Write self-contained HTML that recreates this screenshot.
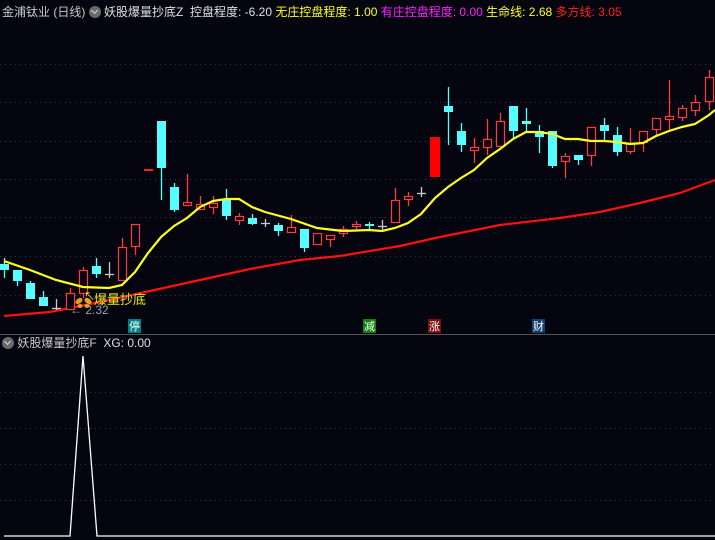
<!DOCTYPE html>
<html><head><meta charset="utf-8"><style>
html,body{margin:0;padding:0;background:#05050f;width:715px;height:540px;overflow:hidden}
.t{position:absolute;font-family:"Liberation Sans","Noto Sans CJK SC",sans-serif;font-size:12px;white-space:pre;line-height:15px}
.ico{display:inline-block;width:12px;height:12px;border-radius:6px;background:#6a6a6a;vertical-align:-2px;position:relative}
.ico:after{content:"";position:absolute;left:3px;top:2px;width:4px;height:4px;border-right:1.5px solid #ddd;border-bottom:1.5px solid #ddd;transform:rotate(45deg)}
.b{position:absolute;width:13px;height:14px;font-family:"Noto Sans CJK SC",sans-serif;font-size:11px;line-height:14px;text-align:center;color:#fff}
</style></head><body>
<svg width="715" height="540" style="position:absolute;left:0;top:0" xmlns="http://www.w3.org/2000/svg">
<g stroke="#3a3a44" stroke-dasharray="1,4" stroke-width="1">
<line x1="0" y1="64.5" x2="715" y2="64.5"/><line x1="0" y1="102.5" x2="715" y2="102.5"/><line x1="0" y1="141.5" x2="715" y2="141.5"/><line x1="0" y1="179.5" x2="715" y2="179.5"/><line x1="0" y1="217.5" x2="715" y2="217.5"/><line x1="0" y1="256.5" x2="715" y2="256.5"/><line x1="0" y1="295.5" x2="715" y2="295.5"/>
<line x1="0" y1="392.5" x2="715" y2="392.5"/><line x1="0" y1="428.5" x2="715" y2="428.5"/><line x1="0" y1="464.5" x2="715" y2="464.5"/><line x1="0" y1="500.5" x2="715" y2="500.5"/>
</g>
<line x1="0" y1="334.5" x2="715" y2="334.5" stroke="#555" stroke-width="1"/>
<polyline fill="none" stroke="#ff1010" stroke-width="2.2" points="4,316 50,312 100,302 150,291 200,280 250,269 300,260 340,256 400,246 440,237 500,225 560,218 600,212 640,203 680,193 715,180"/>
<g stroke-width="1.3">
<g stroke="#55ffff">
<line x1="4.5" y1="258" x2="4.5" y2="278"/><line x1="17.5" y1="270" x2="17.5" y2="286"/><line x1="30.5" y1="281" x2="30.5" y2="299"/><line x1="43.5" y1="291" x2="43.5" y2="306"/><line x1="96.5" y1="258" x2="96.5" y2="278"/><line x1="161.5" y1="121" x2="161.5" y2="200"/><line x1="174.5" y1="183" x2="174.5" y2="212"/><line x1="226.5" y1="189" x2="226.5" y2="220"/><line x1="252.5" y1="214" x2="252.5" y2="225"/><line x1="278.5" y1="223" x2="278.5" y2="236"/><line x1="304.5" y1="229" x2="304.5" y2="252"/><line x1="369.5" y1="222" x2="369.5" y2="229"/><line x1="448.5" y1="87" x2="448.5" y2="145"/><line x1="461.5" y1="123" x2="461.5" y2="152"/><line x1="513.5" y1="106" x2="513.5" y2="140"/><line x1="526.5" y1="108" x2="526.5" y2="131"/><line x1="539.5" y1="125" x2="539.5" y2="153"/><line x1="552.5" y1="131" x2="552.5" y2="168"/><line x1="578.5" y1="155" x2="578.5" y2="165"/><line x1="604.5" y1="118" x2="604.5" y2="142"/><line x1="617.5" y1="127" x2="617.5" y2="156"/>
</g>
<g stroke="#ff3c3c">
<line x1="70.5" y1="288" x2="70.5" y2="310"/><line x1="83.5" y1="267" x2="83.5" y2="298"/><line x1="122.5" y1="238" x2="122.5" y2="281"/><line x1="135.5" y1="224" x2="135.5" y2="255"/><line x1="187.5" y1="174" x2="187.5" y2="206"/><line x1="200.5" y1="196" x2="200.5" y2="210"/><line x1="213.5" y1="196" x2="213.5" y2="214"/><line x1="239.5" y1="213" x2="239.5" y2="225"/><line x1="291.5" y1="215" x2="291.5" y2="233"/><line x1="317.5" y1="233" x2="317.5" y2="245"/><line x1="330.5" y1="235" x2="330.5" y2="247"/><line x1="343.5" y1="226" x2="343.5" y2="237"/><line x1="356.5" y1="221" x2="356.5" y2="229"/><line x1="395.5" y1="188" x2="395.5" y2="223"/><line x1="408.5" y1="192" x2="408.5" y2="206"/><line x1="474.5" y1="138" x2="474.5" y2="163"/><line x1="487.5" y1="119" x2="487.5" y2="155"/><line x1="500.5" y1="113" x2="500.5" y2="147"/><line x1="565.5" y1="153" x2="565.5" y2="178"/><line x1="591.5" y1="127" x2="591.5" y2="166"/><line x1="630.5" y1="128" x2="630.5" y2="154"/><line x1="643.5" y1="131" x2="643.5" y2="152"/><line x1="656.5" y1="118" x2="656.5" y2="135"/><line x1="669.5" y1="80" x2="669.5" y2="131"/><line x1="682.5" y1="105" x2="682.5" y2="121"/><line x1="695.5" y1="95" x2="695.5" y2="116"/><line x1="709.5" y1="70" x2="709.5" y2="110"/>
</g>
<g stroke="#cccccc">
<line x1="56.5" y1="299" x2="56.5" y2="310"/><line x1="52" y1="308.5" x2="61" y2="308.5"/>
<line x1="109.5" y1="262" x2="109.5" y2="278"/><line x1="105" y1="274.5" x2="114" y2="274.5"/>
<line x1="265.5" y1="219" x2="265.5" y2="227"/><line x1="261" y1="223.5" x2="270" y2="223.5"/>
<line x1="382.5" y1="220" x2="382.5" y2="232"/><line x1="378" y1="226.5" x2="387" y2="226.5"/>
<line x1="421.5" y1="187" x2="421.5" y2="197"/><line x1="417" y1="193.5" x2="426" y2="193.5"/>
</g>
</g>
<g fill="#55ffff">
<rect x="0" y="264" width="9" height="6"/><rect x="13" y="270" width="9" height="11"/><rect x="26" y="283" width="9" height="16"/><rect x="39" y="297" width="9" height="9"/><rect x="92" y="266" width="9" height="8"/><rect x="157" y="121" width="9" height="47"/><rect x="170" y="187" width="9" height="23"/><rect x="222" y="199" width="9" height="17"/><rect x="248" y="218" width="9" height="6"/><rect x="274" y="225" width="9" height="6"/><rect x="300" y="229" width="9" height="19"/><rect x="365" y="224" width="9" height="2"/><rect x="444" y="106" width="9" height="6"/><rect x="457" y="131" width="9" height="14"/><rect x="509" y="106" width="9" height="25"/><rect x="522" y="121" width="9" height="3"/><rect x="535" y="131" width="9" height="6"/><rect x="548" y="131" width="9" height="35"/><rect x="574" y="155" width="9" height="5"/><rect x="600" y="125" width="9" height="6"/><rect x="613" y="135" width="9" height="17"/>
</g>
<g fill="#05050f" stroke="#ff3c3c" stroke-width="1.2">
<rect x="66.5" y="293.5" width="8" height="16"/><rect x="79.5" y="270.5" width="8" height="23"/><rect x="118.5" y="247.5" width="8" height="33"/><rect x="131.5" y="224.5" width="8" height="22"/><rect x="183.5" y="202.5" width="8" height="3"/><rect x="196.5" y="204.5" width="8" height="5"/><rect x="209.5" y="203.5" width="8" height="4"/><rect x="235.5" y="216.5" width="8" height="4"/><rect x="287.5" y="227.5" width="8" height="5"/><rect x="313.5" y="233.5" width="8" height="11"/><rect x="326.5" y="235.5" width="8" height="4"/><rect x="339.5" y="229.5" width="8" height="4"/><rect x="352.5" y="224.5" width="8" height="2"/><rect x="391.5" y="200.5" width="8" height="22"/><rect x="404.5" y="196.5" width="8" height="3"/><rect x="470.5" y="147.5" width="8" height="3"/><rect x="483.5" y="139.5" width="8" height="8"/><rect x="496.5" y="121.5" width="8" height="25"/><rect x="561.5" y="156.5" width="8" height="5"/><rect x="587.5" y="127.5" width="8" height="28"/><rect x="626.5" y="143.5" width="8" height="8"/><rect x="639.5" y="131.5" width="8" height="11"/><rect x="652.5" y="118.5" width="8" height="11"/><rect x="665.5" y="116.5" width="8" height="3"/><rect x="678.5" y="108.5" width="8" height="9"/><rect x="691.5" y="102.5" width="8" height="8"/><rect x="705.5" y="77.5" width="8" height="24"/>
</g>
<rect x="144" y="169" width="9" height="2" fill="#ff2020"/>
<rect x="430" y="137" width="10" height="40" fill="#ff0000"/>
<polyline fill="none" stroke="#ffff20" stroke-width="2.2" points="4,261 30,270 56,280 83,287 109,288 122,285 135,272 148,253 161,237 174,226 187,218 200,207 213,201 226,199 239,199 252,207 265,212 291,219 317,228 343,231 369,230 382,231 395,228 408,223 421,214 435,198 448,187 461,178 474,170 487,158 500,149 513,139 526,132 539,132 552,134 565,139 578,139 591,141 604,141 617,142 630,144 643,143 656,136 669,131 682,127 695,124 709,115 715,110"/>
<g fill="#e8a020"><ellipse cx="79" cy="301" rx="4" ry="2.5" transform="rotate(-35 79 301)"/><ellipse cx="88" cy="301" rx="4" ry="2.5" transform="rotate(35 88 301)"/><ellipse cx="80" cy="306" rx="2.5" ry="2"/><ellipse cx="87" cy="306" rx="2.5" ry="2"/></g>
<polyline fill="none" stroke="#ffffff" stroke-width="1.3" points="4,536 70,536 83,356 97,536 715,536"/>
</svg>
<div class="t" style="left:2px;top:5px;color:#c8c8c8">金浦钛业 (日线) <span class="ico"></span> <span style="color:#e0e0e0">妖股爆量抄底Z  控盘程度: -6.20</span> <span style="color:#ffff20">无庄控盘程度: 1.00</span> <span style="color:#ff20ff">有庄控盘程度: 0.00</span> <span style="color:#ffff20">生命线: 2.68</span> <span style="color:#ff2020">多方线: 3.05</span></div>
<div class="t" style="left:94px;top:292px;color:#e8e820;font-size:13px">爆量抄底</div>
<div class="t" style="left:84px;top:290px;color:#e8e820;font-size:11px">↖</div>
<div class="t" style="left:70px;top:303px;color:#9aa0b0;font-size:12px">← 2.32</div>
<div class="b" style="left:128px;top:319px;background:#008080">停</div>
<div class="b" style="left:363px;top:319px;background:#108010">减</div>
<div class="b" style="left:428px;top:319px;background:#801010">涨</div>
<div class="b" style="left:532px;top:319px;background:#104070">财</div>
<div class="t" style="left:2px;top:336px;color:#c8c8c8"><span class="ico"></span> 妖股爆量抄底F  <span style="color:#e0e0e0">XG: 0.00</span></div>
</body></html>
